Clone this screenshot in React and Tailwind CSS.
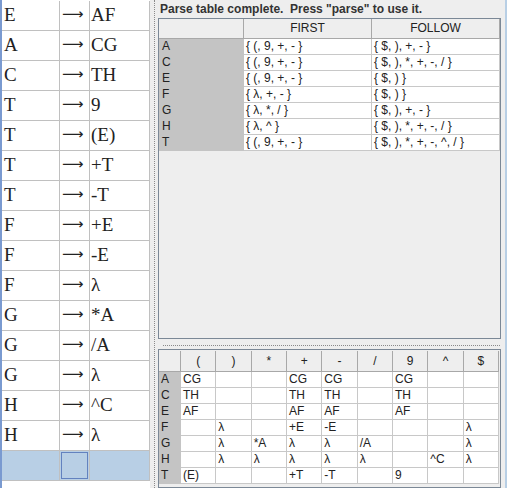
import React from 'react';

const productions = [
  ['E', 'AF'],
  ['A', 'CG'],
  ['C', 'TH'],
  ['T', '9'],
  ['T', '(E)'],
  ['T', '+T'],
  ['T', '-T'],
  ['F', '+E'],
  ['F', '-E'],
  ['F', 'λ'],
  ['G', '*A'],
  ['G', '/A'],
  ['G', 'λ'],
  ['H', '^C'],
  ['H', 'λ'],
];

const firstFollow = [
  ['A', '{ (, 9, +, - }', '{ $, ), +, - }'],
  ['C', '{ (, 9, +, - }', '{ $, ), *, +, -, / }'],
  ['E', '{ (, 9, +, - }', '{ $, ) }'],
  ['F', '{ λ, +, - }', '{ $, ) }'],
  ['G', '{ λ, *, / }', '{ $, ), +, - }'],
  ['H', '{ λ, ^ }', '{ $, ), *, +, -, / }'],
  ['T', '{ (, 9, +, - }', '{ $, ), *, +, -, ^, / }'],
];

const terminals = ['(', ')', '*', '+', '-', '/', '9', '^', '$'];

const parseTable = [
  ['A', ['CG', '', '', 'CG', 'CG', '', 'CG', '', '']],
  ['C', ['TH', '', '', 'TH', 'TH', '', 'TH', '', '']],
  ['E', ['AF', '', '', 'AF', 'AF', '', 'AF', '', '']],
  ['F', ['', 'λ', '', '+E', '-E', '', '', '', 'λ']],
  ['G', ['', 'λ', '*A', 'λ', 'λ', '/A', '', '', 'λ']],
  ['H', ['', 'λ', 'λ', 'λ', 'λ', 'λ', '', '^C', 'λ']],
  ['T', ['(E)', '', '', '+T', '-T', '', '9', '', '']],
];

const serif = { fontFamily: '"Liberation Serif", "Times New Roman", serif' };
const sans = { fontFamily: '"Liberation Sans", Arial, sans-serif' };
const arrowFont = { fontFamily: '"DejaVu Sans", sans-serif' };

const GrammarTable = () => (
  <div className="w-[150px] h-full bg-white border-l-2 border-[#7a9ad0] pt-[1px] text-[19px] text-[#222]" style={serif}>
    {productions.map(([lhs, rhs], i) => (
      <div key={i} className="flex h-[30px] border-b border-[#c0c0c0] leading-[28px]">
        <div className="w-[58px] border-r border-[#c0c0c0] pl-[2px]">{lhs}</div>
        <div className="w-[30px] border-r border-[#c0c0c0] pl-[2px] text-[15px] leading-[26px] overflow-hidden" style={arrowFont}>⟶</div>
        <div className="w-[60px] border-r border-[#c0c0c0] pl-[1px]">{rhs}</div>
      </div>
    ))}
    {/* empty row being edited */}
    <div className="flex h-[30px] border-b border-[#c0c0c0] bg-[#b8cfe5]">
      <div className="w-[58px] border-r border-[#c0c0c0]" />
      <div className="w-[30px] border-r border-[#c0c0c0] p-[1px]">
        <div className="h-full border border-[#6382bf]" />
      </div>
      <div className="w-[60px] border-r border-[#c0c0c0]" />
    </div>
  </div>
);

const FirstFollowTable = () => (
  <div className="w-[341px] text-[12px] text-[#222]" style={sans}>
    <div className="grid grid-cols-[85px_128px_128px] h-[20px] border-b border-[#a8a8a8] bg-[#eeeeee]">
      <div className="border-r border-[#a8a8a8]" />
      <div className="border-r border-[#a8a8a8] text-center leading-[19px]">FIRST</div>
      <div className="border-r border-[#a8a8a8] text-center leading-[19px]">FOLLOW</div>
    </div>
    {firstFollow.map(([nt, first, follow]) => (
      <div key={nt} className="grid grid-cols-[85px_128px_128px] h-[16px] leading-[15px]">
        <div className="bg-[#c4c4c4] border-b border-[#c4c4c4] pl-[3px]">{nt}</div>
        <div className="bg-white border-r border-b border-[#c8c8c8] pl-[2px] whitespace-pre">{first}</div>
        <div className="bg-white border-r border-b border-[#c8c8c8] pl-[2px] whitespace-pre">{follow}</div>
      </div>
    ))}
  </div>
);

const ParseTable = () => (
  <div className="w-[340px] text-[12px] text-[#222]" style={sans}>
    <div className="grid grid-cols-[22px_repeat(9,minmax(0,1fr))] h-[21px] border-b border-[#a8a8a8] bg-[#eeeeee]">
      <div className="border-r border-[#a8a8a8]" />
      {terminals.map((t) => (
        <div key={t} className="border-r border-[#a8a8a8] text-center leading-[20px]">{t}</div>
      ))}
    </div>
    {parseTable.map(([nt, cells]) => (
      <div key={nt} className="grid grid-cols-[22px_repeat(9,minmax(0,1fr))] h-[16px] leading-[15px]">
        <div className="bg-[#c4c4c4] border-r border-b border-[#c4c4c4] pl-[2px]">{nt}</div>
        {cells.map((c, j) => (
          <div key={j} className="bg-white border-r border-b border-[#c8c8c8] pl-[2px] whitespace-pre">{c}</div>
        ))}
      </div>
    ))}
  </div>
);

export default function App() {
  return (
    <div className="flex w-[507px] h-[488px] overflow-hidden bg-[#eeeeee]">
      <GrammarTable />

      {/* vertical splitter */}
      <div className="w-[7px] h-full bg-[#eeeeee] pl-[4px]">
        <div className="h-full border-l border-dotted border-[#8a8a8a]" />
      </div>

      <div className="flex-1 h-full flex flex-col bg-[#eeeeee] border-r-2 border-[#b8cfe5]">
        <div className="h-[18px] pl-[3px] pt-[3px] text-[12px] font-bold leading-[13px] text-[#333] whitespace-pre" style={sans}>
          {'Parse table complete.  Press "parse" to use it.'}
        </div>

        <div className="h-[321px] ml-[1px] mr-[4px] border border-[#7b8896] bg-[#eeeeee] overflow-hidden">
          <FirstFollowTable />
        </div>

        {/* horizontal splitter */}
        <div className="h-[10px] pt-[6px] pl-[6px] pr-[5px]">
          <div className="border-t border-dotted border-[#8a8a8a]" />
        </div>

        <div className="flex-1 ml-[1px] mr-[4px] border border-[#7b8896] bg-[#eeeeee] overflow-hidden pt-[1px]">
          <ParseTable />
        </div>
      </div>
    </div>
  );
}
